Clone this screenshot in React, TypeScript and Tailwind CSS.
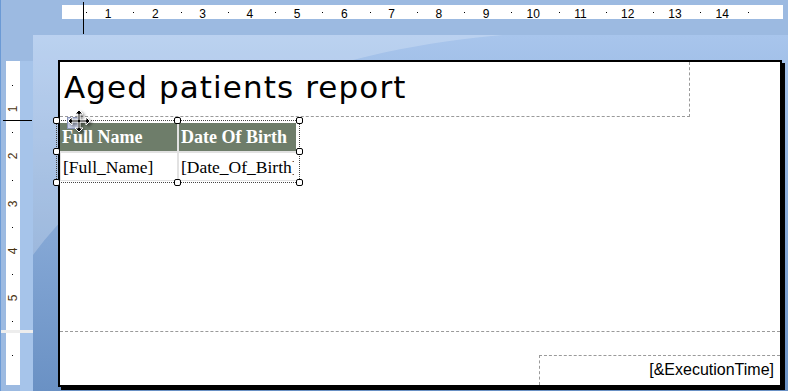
import React from "react";

const hNums = [1, 2, 3, 4, 5, 6, 7, 8, 9, 10, 11, 12, 13, 14];
const vNums = [1, 2, 3, 4, 5];

function Handle({ className }: { className: string }) {
  return (
    <div
      className={`absolute h-[7px] w-[7px] rounded-[2px] border border-black bg-white ${className}`}
    />
  );
}

function MoveIcon() {
  return (
    <svg
      width="24"
      height="24"
      viewBox="0 0 24 24"
      className="drop-shadow-[2px_2px_1.5px_rgba(0,0,0,0.45)]"
    >
      <polygon
        points="12,1 16,5 13,5 13,11 19,11 19,8 23,12 19,16 19,13 13,13 13,19 16,19 12,23 8,19 11,19 11,13 5,13 5,16 1,12 5,8 5,11 11,11 11,5 8,5"
        fill="#000"
        stroke="#fff"
        strokeWidth="1"
        strokeLinejoin="miter"
      />
    </svg>
  );
}

function VerticalRuler() {
  return (
    <div className="flex w-[32px] shrink-0 flex-col">
      <div className="h-[26px] shrink-0" />
      <div className="flex h-[269px] shrink-0">
        <div className="w-[5px]" />
        <div className="flex w-[14px] flex-col bg-white pt-[24px]">
          {vNums.map((n) => (
            <div key={n} className="flex h-[47.25px] shrink-0 flex-col">
              <div className="ml-[6px] h-px w-px bg-black" />
              <div className="flex flex-1 items-center justify-center pl-[1px]">
                <span className="inline-block -rotate-90 text-[12px] leading-[12px] text-[#4a3412]">
                  {n}
                </span>
              </div>
            </div>
          ))}
          <div className="ml-[6px] h-px w-px bg-black" />
        </div>
        <div className="w-[13px] bg-[#a6c4ea]" />
      </div>
      <div className="h-[3px] shrink-0 bg-[#ededed]" />
      <div className="flex h-[52px] shrink-0">
        <div className="w-[5px]" />
        <div className="flex w-[14px] flex-col bg-white pt-[22px]">
          <div className="ml-[6px] h-px w-px bg-black" />
        </div>
        <div className="w-[13px] bg-[#a6c4ea]" />
      </div>
      <div className="flex flex-1">
        <div className="w-[19px]" />
        <div className="w-[13px] bg-[#a6c4ea]" />
      </div>
    </div>
  );
}

function Page() {
  return (
    <div className="relative flex h-[327px] w-[724px] flex-col border-2 border-black bg-white shadow-[3px_3px_0_#000]">
      <div className="h-[55px] w-[630px] shrink-0 border-b border-r border-dashed border-[#9a9a9a] pl-[4px] pt-[10px] font-['DejaVu_Sans',sans-serif] text-[31px] leading-[31px] tracking-[1.1px] text-black">
        Aged patients report
      </div>
      <div className="flex-1">
        <div className="relative -ml-[4px] mt-[3px] h-[63px] w-[244px] border border-dotted border-[#444] pl-[3px] pt-[2px]">
          <div className="grid w-[236px] grid-cols-[117px_117px] grid-rows-[28px_27px] gap-[2px] bg-[#e2e2e2] pb-[1px] font-['Liberation_Serif',serif]">
            <div className="bg-[#6e7d6a] pl-[2px] text-[18px] font-bold leading-[28px] text-white whitespace-nowrap">
              Full Name
            </div>
            <div className="bg-[#6e7d6a] pl-[2px] text-[18px] font-bold leading-[28px] text-white whitespace-nowrap">
              Date Of Birth
            </div>
            <div className="ml-[1px] overflow-hidden whitespace-nowrap bg-white pl-[2px] pt-[2px] text-[17.5px] leading-[25px] text-black">
              [Full_Name]
            </div>
            <div className="overflow-hidden bg-white pl-[2px] pr-[2px] pt-[2px]">
              <div className="overflow-hidden whitespace-nowrap text-[17.5px] leading-[25px] text-black">
                [Date_Of_Birth]
              </div>
            </div>
          </div>
          <Handle className="-left-[4px] -top-[4px]" />
          <Handle className="left-[117px] -top-[4px]" />
          <Handle className="-right-[4px] -top-[4px]" />
          <Handle className="-left-[4px] top-[27px]" />
          <Handle className="-right-[4px] top-[27px]" />
          <Handle className="-left-[4px] -bottom-[4px]" />
          <Handle className="left-[117px] -bottom-[4px]" />
          <Handle className="-right-[4px] -bottom-[4px]" />
          <div className="absolute left-[10px] -top-[4px] h-[12px] w-[11px] border border-[#8a94b8] bg-[#c7cfe6]" />
          <div className="absolute left-[10px] -top-[12px]">
            <MoveIcon />
          </div>
        </div>
      </div>
      <div className="flex h-[54px] shrink-0 items-end justify-end border-t border-dashed border-[#9a9a9a]">
        <div className="h-[30px] w-[241px] border-l border-t border-dashed border-[#9a9a9a] pr-[6px] text-right font-['Liberation_Sans',Arial,sans-serif] text-[16px] leading-[27px] text-black">
          [&amp;ExecutionTime]
        </div>
      </div>
    </div>
  );
}

export default function App() {
  return (
    <div className="relative flex h-[391px] w-[788px] flex-col overflow-hidden border-l border-[#6b9ad5] bg-[#9cbae1] font-['Liberation_Sans',Arial,sans-serif]">
      <div className="flex h-[35px] shrink-0">
        <div className="ml-[61px] mt-[5px] flex h-[14px] w-[721px] bg-white pl-[24px] text-black">
          {hNums.map((n) => (
            <div key={n} className="flex h-full w-[47.25px] shrink-0">
              <div className="mt-[7px] h-px w-px bg-black" />
              <span className="w-[42px] pt-[3px] text-center text-[12px] leading-[12px]">
                {n}
              </span>
            </div>
          ))}
          <div className="mt-[7px] h-px w-px bg-black" />
        </div>
      </div>
      <div className="flex flex-1">
        <VerticalRuler />
        <div className="relative flex-1 bg-linear-to-b from-[#a8c5ec] to-[#6a91c4] pl-[25px] pt-[25px]">
          <svg
            className="absolute inset-0 h-full w-full"
            viewBox="0 0 755 356"
            preserveAspectRatio="none"
          >
            <path d="M0 0 H470 C330 12 120 60 0 220 Z" fill="#ffffff" fillOpacity="0.22" />
          </svg>
          <Page />
        </div>
      </div>
      <div className="absolute left-[82px] top-[2px] h-[32px] w-px bg-black" />
      <div className="absolute left-[2px] top-[120px] h-px w-[29px] bg-black" />
    </div>
  );
}
